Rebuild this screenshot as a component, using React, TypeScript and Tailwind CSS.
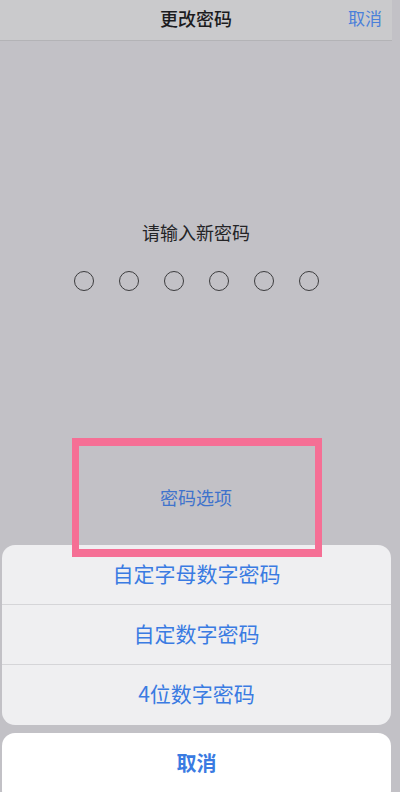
import React from 'react';

const font = { fontFamily: '"Noto Sans CJK SC", "Noto Sans", sans-serif' };

export default function App() {
  const options = ['自定字母数字密码', '自定数字密码', '4位数字密码'];

  return (
    <div className="relative h-[792px] w-full overflow-hidden bg-[#c2c1c6]" style={font}>
      <div className="w-[392px]">
        {/* ─── Nav bar ─── */}
        <div className="relative flex h-[41px] items-center justify-center border-b border-[#b3b3b6] bg-[#cacacc] pb-[5px]">
          <span className="text-[18px] font-medium leading-6 text-[#1c1c1e]">更改密码</span>
          <span className="absolute right-[10px] top-[6px] text-[17px] leading-6 text-[#4a80da]">取消</span>
        </div>

        {/* ─── Passcode entry ─── */}
        <div className="mt-[179px] text-center text-[18px] leading-6 text-[#242426]">请输入新密码</div>
        <div className="mt-[27px] flex justify-center gap-[25px]">
          {[0, 1, 2, 3, 4, 5].map((i) => (
            <div key={i} className="h-5 w-5 rounded-full border-[1.5px] border-[#3c3c3e]" />
          ))}
        </div>

        {/* ─── Options link ─── */}
        <div className="relative mt-[194px] text-center text-[18px] leading-6 text-[#3f73cc]">
          密码选项
          <div className="pointer-events-none absolute left-[72px] top-[-47px] z-10 h-[119px] w-[250px] border-x-[7px] border-y-[8px] border-[#f56f95]" />
        </div>

        {/* ─── Action sheet ─── */}
        <div className="ml-[2px] mt-[36px] w-[389px] overflow-hidden rounded-[13px] bg-[#efeff1]">
          {options.map((label, i) => (
            <div
              key={label}
              className={`flex h-[60px] items-center justify-center pb-[2px] text-[21px] text-[#3a7be2] ${i < options.length - 1 ? 'border-b border-[#d5d5d8]' : ''}`}
            >
              {label}
            </div>
          ))}
        </div>
        <div className="ml-[2px] mt-[8px] flex h-[70px] w-[389px] items-start justify-center rounded-[13px] bg-white pt-[16px]">
          <span className="text-[20px] font-bold leading-7 text-[#3a7be2]">取消</span>
        </div>
      </div>
    </div>
  );
}
